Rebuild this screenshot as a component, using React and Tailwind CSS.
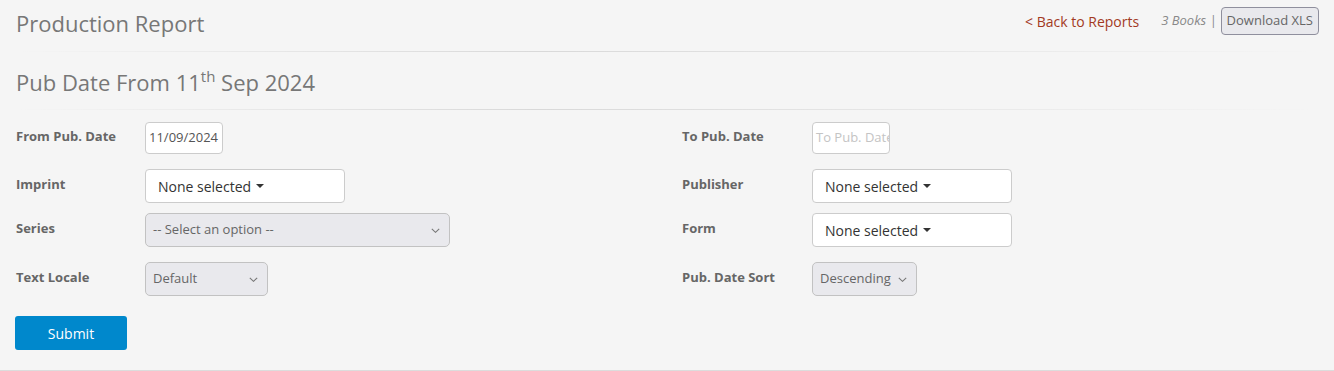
import React from 'react';

const font = { fontFamily: '"Open Sans", "Noto Sans", sans-serif' };

function Rule() {
  return <div className="h-px bg-gradient-to-r from-transparent via-[#d9d9d9] via-40% to-transparent" />;
}

function Caret() {
  return <span className="inline-block ml-[5px] align-middle w-0 h-0 border-x-[4px] border-x-transparent border-t-[4px] border-t-[#333]" />;
}

function Chevron() {
  return (
    <svg width="9" height="5" viewBox="0 0 9 5" className="shrink-0">
      <path d="M0.8 0.8l3.7 3.5 3.7-3.5" fill="none" stroke="#777" strokeWidth="1.1" />
    </svg>
  );
}

function Label({ children, w = 'w-[130px]' }) {
  return <div className={`${w} shrink-0 text-[13px] font-bold text-[#666] -mt-[2px]`}>{children}</div>;
}

function DateInput({ value, placeholder }) {
  return (
    <div className="w-[78px] h-[32px] bg-white border border-[#ccc] rounded-[4px] flex items-center px-[3px] overflow-hidden whitespace-nowrap text-[13px]">
      {value ? <span className="text-[#555]">{value}</span> : <span className="text-[#c4c4c4]">{placeholder}</span>}
    </div>
  );
}

function MultiSelect() {
  return (
    <div className="w-[200px] h-[34px] bg-white border border-[#ccc] rounded-[4px] flex items-center px-3 text-[14px] text-[#333]">
      None selected <Caret />
    </div>
  );
}

function Select({ text, width }) {
  return (
    <div className={`${width} h-[34px] bg-[#e9e9ed] border border-[#c2c2c2] rounded-[5px] flex items-center justify-between pl-[7px] pr-[9px] text-[13px] text-[#666]`}>
      <span>{text}</span>
      <Chevron />
    </div>
  );
}

export default function App() {
  return (
    <div style={font} className="w-[1334px] h-[371px] bg-[#f5f5f5] border-b border-[#dcdcdc] overflow-hidden">
      <div className="px-4">
        <div className="flex items-start justify-between h-[51px]">
          <h1 className="text-[22px] text-[#777] leading-none mt-[12px]">Production Report</h1>
          <div className="flex items-center mt-[7px] -mr-[1px]">
            <a className="text-[14px] text-[#a33a1f] mr-[22px] mt-[1px]">&lt; Back to Reports</a>
            <span className="text-[13px] italic text-[#888]">3 Books |</span>
            <button className="ml-[4px] h-[28px] px-[5px] bg-[#e9e9ed] border border-[#8f8f9d] rounded-[4px] text-[13px] text-[#666]">Download XLS</button>
          </div>
        </div>
        <Rule />
        <div className="h-[57px] flex items-center">
          <h2 className="text-[22px] text-[#777] leading-none mt-[2px]">
            Pub Date From 11<sup className="text-[15px] relative -top-[9px] align-baseline">th</sup> Sep 2024
          </h2>
        </div>
        <Rule />
      </div>

      <div className="grid grid-cols-2 mt-[12px]">
        <div className="pl-4">
          <div className="flex items-center h-[32px]"><Label w="w-[129px]">From Pub. Date</Label><DateInput value="11/09/2024" /></div>
          <div className="flex items-center h-[34px] mt-[15px]"><Label w="w-[129px]">Imprint</Label><MultiSelect /></div>
          <div className="flex items-center h-[34px] mt-[10px]"><Label w="w-[129px]">Series</Label><Select text="-- Select an option --" width="w-[305px]" /></div>
          <div className="flex items-center h-[34px] mt-[15px]"><Label w="w-[129px]">Text Locale</Label><Select text="Default" width="w-[123px]" /></div>
          <button className="mt-[20px] -ml-px w-[112px] h-[34px] bg-[#0088cc] rounded-[3px] text-white text-[14px]">Submit</button>
        </div>
        <div className="pl-[15px]">
          <div className="flex items-center h-[32px]"><Label>To Pub. Date</Label><DateInput placeholder="To Pub. Date" /></div>
          <div className="flex items-center h-[34px] mt-[15px]"><Label>Publisher</Label><MultiSelect /></div>
          <div className="flex items-center h-[34px] mt-[10px]"><Label>Form</Label><MultiSelect /></div>
          <div className="flex items-center h-[34px] mt-[15px]"><Label>Pub. Date Sort</Label><Select text="Descending" width="w-[105px]" /></div>
        </div>
      </div>
    </div>
  );
}
